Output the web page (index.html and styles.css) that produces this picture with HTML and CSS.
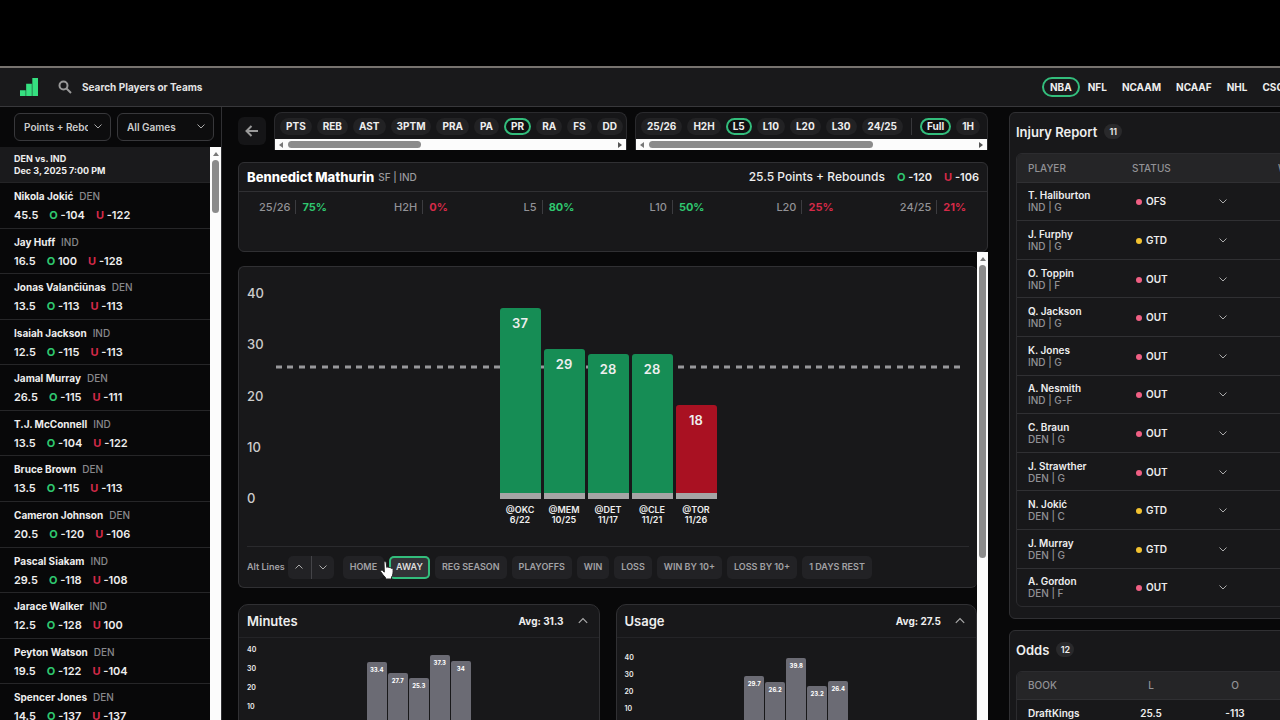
FILE: index.html
```html
<!DOCTYPE html>
<html lang="en">
<head>
<meta charset="utf-8">
<title>Player Props</title>
<link rel="stylesheet" href="styles.css">
</head>
<body>
<svg class="defs" aria-hidden="true">
  <symbol id="down" viewBox="0 0 10 10"><path d="M1.5 3.5 5 7l3.500-3.500"/></symbol>
  <symbol id="up" viewBox="0 0 10 10"><path d="M1.500 6.500 5 3l3.500 3.500"/></symbol>
</svg>
<div class="app">
  <header class="topbar">
    <svg class="logo" viewBox="0 0 19 19" aria-label="Home"><path d="M0 13h6v6H0zM6.500 6h6v13h-6zM13 0h6v19h-6z"/></svg>
    <label class="search">
      <svg viewBox="0 0 14 14" aria-hidden="true"><circle cx="5.500" cy="5.500" r="4"/><path d="m8.500 8.500 4.500 4.500"/></svg>
      <input type="text" placeholder="Search Players or Teams" aria-label="Search Players or Teams">
    </label>
    <nav class="leagues">
      <a class="league on" href="#">NBA</a><a class="league" href="#">NFL</a><a class="league" href="#">NCAAM</a><a class="league" href="#">NCAAF</a><a class="league" href="#">NHL</a><a class="league" href="#">CSGO</a>
    </nav>
  </header>

  <div class="body">
    <aside class="sidebar">
      <div class="filters">
        <div class="picker"><select aria-label="Stat"><option>Points + Rebounds</option></select><svg aria-hidden="true"><use href="#down"/></svg></div>
        <div class="picker"><select aria-label="Games"><option>All Games</option></select><svg aria-hidden="true"><use href="#down"/></svg></div>
      </div>
      <div class="list-wrap">
        <div class="list">
          <div class="game">DEN vs. IND<br>Dec 3, 2025 7:00 PM</div>
          <ul class="players" id="players"></ul>
        </div>
        <div class="vbar list-bar"><i class="tip"></i><i class="thumb"></i></div>
      </div>
    </aside>

    <main class="main">
      <div class="tools">
        <button class="back" aria-label="Back"><svg viewBox="0 0 14 14"><path d="M13 7H2M6.500 2 1.500 7l5 5"/></svg></button>
        <div class="strip">
          <div class="pills">
            <button class="pill">PTS</button><button class="pill">REB</button><button class="pill">AST</button><button class="pill">3PTM</button><button class="pill">PRA</button><button class="pill">PA</button><button class="pill on">PR</button><button class="pill">RA</button><button class="pill">FS</button><button class="pill">DD</button>
          </div>
          <div class="hbar"><i class="tip prev"></i><i class="track"><i class="thumb short"></i></i><i class="tip next"></i></div>
        </div>
        <div class="strip">
          <div class="pills">
            <button class="pill">25/26</button><button class="pill">H2H</button><button class="pill on">L5</button><button class="pill">L10</button><button class="pill">L20</button><button class="pill">L30</button><button class="pill">24/25</button><span class="rule"></span><button class="pill on">Full</button><button class="pill">1H</button>
          </div>
          <div class="hbar"><i class="tip prev"></i><i class="track"><i class="thumb long"></i></i><i class="tip next"></i></div>
        </div>
      </div>

      <section class="card hero">
        <div class="hero-head">
          <h1>Bennedict Mathurin</h1><span class="pos">SF | IND</span>
          <span class="line">25.5 Points + Rebounds</span>
          <span class="odd"><b class="o">O</b> -120</span>
          <span class="odd"><b class="u">U</b> -106</span>
        </div>
        <div class="rates">
          <span class="rate">25/26<b class="good">75%</b></span>
          <span class="rate">H2H<b class="bad">0%</b></span>
          <span class="rate">L5<b class="good">80%</b></span>
          <span class="rate">L10<b class="good">50%</b></span>
          <span class="rate">L20<b class="bad">25%</b></span>
          <span class="rate">24/25<b class="bad">21%</b></span>
        </div>
      </section>

      <div class="scroll">
        <div class="content">
          <section class="card chart-card">
            <div class="chart">
              <div class="axis"><span>40</span><span>30</span><span>20</span><span>10</span><span>0</span></div>
              <svg class="dash" aria-hidden="true"><line x1="0" y1="2" x2="100%" y2="2"/></svg>
              <div class="bars">
                <div class="col"><div class="bar" style="height:191px">37</div><span>@OKC<br>6/22</span></div>
                <div class="col"><div class="bar" style="height:150px">29</div><span>@MEM<br>10/25</span></div>
                <div class="col"><div class="bar" style="height:145px">28</div><span>@DET<br>11/17</span></div>
                <div class="col"><div class="bar" style="height:145px">28</div><span>@CLE<br>11/21</span></div>
                <div class="col"><div class="bar miss" style="height:94px">18</div><span>@TOR<br>11/26</span></div>
              </div>
            </div>
            <div class="alt">
              <span class="alt-label">Alt Lines</span>
              <div class="stepper"><button aria-label="Raise line"><svg><use href="#up"/></svg></button><button aria-label="Lower line"><svg><use href="#down"/></svg></button></div>
              <div class="chips">
                <button class="chip">HOME</button><button class="chip on">AWAY
                  <svg class="hand" viewBox="0 0 14 19" aria-hidden="true"><path d="M4 1.500C4 .3 6 .3 6.200 1.500L6.800 6.500c.5-.8 2-.6 2.200.3.700-.7 2-.3 2.100.6.8-.4 2 0 2 1.200.1 3-.1 6-1.600 7.500V18H5.500v-1.500C3.500 15 2.500 13 .8 10.800c-.8-1.100.8-2.300 1.900-1.200l1.600 1.500z"/></svg>
                </button><button class="chip">REG SEASON</button><button class="chip">PLAYOFFS</button><button class="chip">WIN</button><button class="chip">LOSS</button><button class="chip">WIN BY 10+</button><button class="chip">LOSS BY 10+</button><button class="chip">1 DAYS REST</button>
              </div>
            </div>
          </section>
          <div class="minis">
            <section class="card mini">
              <div class="mini-head"><h2>Minutes</h2><span>Avg: 31.3</span><button aria-label="Collapse Minutes"><svg><use href="#up"/></svg></button></div>
              <div class="mini-chart">
                <div class="axis minutes"><span>40</span><span>30</span><span>20</span><span>10</span><span>0</span></div>
                <div class="bars"><div class="bar" style="height:64px">33.4</div><div class="bar" style="height:53px">27.7</div><div class="bar" style="height:48px">25.3</div><div class="bar" style="height:71px">37.3</div><div class="bar" style="height:65px">34</div></div>
              </div>
            </section>
            <section class="card mini">
              <div class="mini-head"><h2>Usage</h2><span>Avg: 27.5</span><button aria-label="Collapse Usage"><svg><use href="#up"/></svg></button></div>
              <div class="mini-chart">
                <div class="axis usage"><span>40</span><span>30</span><span>20</span><span>10</span><span>0</span></div>
                <div class="bars"><div class="bar" style="height:50px">29.7</div><div class="bar" style="height:44px">26.2</div><div class="bar" style="height:68px">39.8</div><div class="bar" style="height:40px">23.2</div><div class="bar" style="height:45px">26.4</div></div>
              </div>
            </section>
          </div>
        </div>
        <div class="vbar main-bar"><i class="tip"></i><i class="thumb"></i></div>
      </div>
    </main>

    <aside class="rail">
      <section class="card panel">
        <h2>Injury Report <span class="count">11</span></h2>
        <div class="frame">
          <table class="injuries">
            <thead><tr><th>PLAYER</th><th>STATUS</th><th></th><th>W/O</th></tr></thead>
            <tbody id="injuries"></tbody>
          </table>
        </div>
      </section>
      <section class="card panel">
        <h2>Odds <span class="count">12</span></h2>
        <div class="frame">
          <table class="books">
            <thead><tr><th>BOOK</th><th>L</th><th>O</th><th></th></tr></thead>
            <tbody><tr><td>DraftKings</td><td>25.5</td><td>-113</td><td></td></tr></tbody>
          </table>
        </div>
      </section>
    </aside>
  </div>
</div>
<script src="app.js"></script>
</body>
</html>
```
FILE: styles.css
```css
* { box-sizing: border-box; }
body { margin: 0; background: #000; color: #eee; font: 600 11px/12px Inter, "Liberation Sans", sans-serif; }
button, select, input { font: inherit; color: inherit; border: 0; background: none; padding: 0; margin: 0; }
h1, h2, ul { margin: 0; padding: 0; }
i { display: block; }
svg { width: 10px; height: 10px; fill: none; stroke: #aaa; stroke-width: 1; flex: none; display: block; }
.defs { position: absolute; width: 0; height: 0; }
.app { height: 100vh; padding-top: 66px; display: flex; flex-direction: column; overflow: hidden; }
.card { background: #18181a; border: 1px solid #303033; border-radius: 6px; }

.topbar { display: flex; align-items: center; height: 41px; flex: none; background: #19191b; border-top: 2px solid #77736f; border-bottom: 1px solid #38383b; padding-left: 20px; overflow: hidden; }
.logo { width: 18px; height: 18px; fill: #35e080; stroke: none; }
.search { display: flex; align-items: center; gap: 10px; margin-left: 20px; flex: 1; font-size: 10px; font-weight: 700; }
.search svg { width: 14px; height: 14px; stroke: #999; stroke-width: 2; }
.search input { width: 200px; outline: 0; }
.search input::placeholder { color: #e4e4e4; opacity: 1; }
.leagues { display: flex; gap: 1px; width: 238px; flex: none; }
.league { color: #eee; text-decoration: none; padding: 1px 5px; border: 2px solid transparent; border-radius: 10px; font-size: 10px; line-height: 14px; font-weight: 700; }
.league.on { border-color: #33bd7c; padding: 1px 6px; }

.body { display: grid; grid-template-columns: 222px minmax(0, 1fr) 271px; flex: 1; min-height: 0; background: #080809; }
.sidebar { border-right: 1px solid #303033; display: flex; flex-direction: column; min-height: 0; }
.filters { display: grid; grid-template-columns: 1fr 1fr; gap: 6px; padding: 6px 7px 6px 14px; }
.picker { position: relative; font-size: 10px; }
.picker select { appearance: none; width: 100%; height: 28px; border: 1px solid #38383b; border-radius: 6px; background: #0d0d0e; padding: 0 22px 0 9px; color: #ccc; }
.picker svg { position: absolute; right: 8px; top: 8px; pointer-events: none; }
.list-wrap { display: flex; flex: 1; min-height: 0; overflow: hidden; }
.list { flex: 1; }
.game { height: 36px; padding: 6px 14px; background: #1a1a1c; border-bottom: 1px solid #242426; font-size: 9px; font-weight: 700; }
.players { list-style: none; height: 547px; display: grid; grid-auto-rows: 1fr; }
.players li { border-bottom: 1px solid #262628; padding: 7px 14px 6px; display: flex; flex-direction: column; gap: 7px; }
.name { font-size: 10px; font-weight: 700; }
.players small { font-size: 10px; color: #88888c; font-weight: 500; margin-left: 6px; }
.prices { display: flex; gap: 11px; }
.o { color: #2fc76f; font-weight: 700; }
.u { color: #d42a48; font-weight: 700; }

.vbar { background: #fcfcfc; display: flex; flex-direction: column; align-items: center; gap: 4px; padding-top: 5px; width: 11px; flex: none; }
.thumb { background: #8b8b8b; border-radius: 4px; }
.vbar .thumb { width: 7px; }
.list-bar .thumb { height: 53px; }
.main-bar .thumb { height: 293px; }
.tip { border: 3px solid transparent; border-bottom: 4px solid #777; border-top: 0; width: 0; height: 0; flex: none; }
.hbar { height: 11px; background: #fcfcfc; display: flex; align-items: center; gap: 5px; padding: 0 4px; }
.tip.prev { border: 3px solid transparent; border-right: 4px solid #777; border-left: 0; }
.tip.next { border: 3px solid transparent; border-left: 4px solid #555; border-right: 0; }
.track { flex: 1; }
.hbar .thumb { height: 7px; }
.short { width: 41%; }
.long { width: 69%; }

.main { padding: 5px 21px 0 16px; display: flex; flex-direction: column; min-height: 0; }
.tools { display: grid; grid-template-columns: 28px minmax(0, 1fr) minmax(0, 1fr); column-gap: 8px; align-items: center; }
.back { height: 28px; background: #151517; border-radius: 6px; display: grid; place-items: center; }
.back svg { width: 14px; height: 14px; stroke: #999; stroke-width: 2; }
.strip { border: 1px solid #2a2a2d; border-bottom: 0; border-radius: 8px 8px 0 0; background: #161618; overflow: hidden; }
.pills { display: flex; gap: 5px; padding: 5px 4px 4px 5px; overflow: hidden; }
.pill { flex: none; height: 17px; padding: 0 6px; border-radius: 9px; background: #222224; font-size: 10px; font-weight: 700; line-height: 17px; }
.pill.on { background: #101011; box-shadow: inset 0 0 0 2px #33bd7c; padding: 0 7px; }
.rule { width: 1px; background: #38383b; flex: none; margin: 0 3px; }

.hero { margin-top: 12px; height: 90px; flex: none; }
.hero-head { display: flex; align-items: center; height: 29px; padding: 0 8px; border-bottom: 1px solid #303033; font-size: 12px; }
h1 { font-size: 13px; font-weight: 800; color: #fff; }
.pos { font-size: 10px; font-weight: 500; color: #9a9a9e; margin-left: 4px; flex: 1; }
.line { font-weight: 500; }
.odd { margin-left: 12px; font-size: 11px; }
.rates { display: grid; grid-template-columns: repeat(6, 1fr); justify-items: center; margin: 0 -10px; padding: 8px 0; color: #929296; }
.rate { line-height: 14px; display: flex; font-weight: 500; }
.rate b { margin-left: 5px; padding-left: 6px; border-left: 1px solid #3c3c40; font-weight: 700; }
.good { color: #2fc76f; }
.bad { color: #d42a48; }

.scroll { flex: 1; min-height: 0; display: flex; overflow: hidden; }
.content { flex: 1; min-width: 0; padding-top: 14px; }
.chart-card { padding: 20px 8px 0; border-right: 0; }
.chart { display: grid; height: 259px; }
.chart > *, .mini-chart > * { grid-area: 1 / 1; }
.axis { display: flex; flex-direction: column; justify-content: space-between; }
.chart .axis { height: 217px; font-size: 13px; font-weight: 500; color: #ccc; }
.dash { width: calc(100% - 33px); height: 4px; margin: 78px 0 0 29px; }
.dash line { stroke: #98989b; stroke-width: 3; stroke-dasharray: 6 5 6 6; }
.bars { display: flex; justify-content: center; align-items: flex-end; }
.chart .bars { gap: 3px; height: 240px; z-index: 1; }
.col { width: 41px; text-align: center; font-size: 9px; line-height: 10px; }
.col span { display: block; padding-top: 6px; height: 28px; white-space: nowrap; }
.col .bar { background: #168d55; border-radius: 3px 3px 0 0; border-bottom: 6px solid #a5a5a5; padding-top: 8px; font-size: 13px; line-height: 14px; }
.col .miss { background: #a91122; }
.alt { border-top: 1px solid #2a2a2d; height: 41px; display: flex; align-items: center; color: #a2a2a6; }
.alt-label, .chip { font-size: 9px; font-weight: 600; white-space: nowrap; }
.stepper { display: flex; height: 23px; background: #222225; border-radius: 5px; margin-left: 3px; }
.stepper button { width: 23px; display: grid; place-items: center; }
.stepper button + button { border-left: 1px solid #444448; }
.chips { display: flex; gap: 5px; margin-left: 9px; }
.chip { position: relative; height: 23px; padding: 0 7px; border-radius: 5px; background: #222225; }
.chip.on { color: #ddd; background: #333337; box-shadow: inset 0 0 0 2px #33bd7c; }
.hand { position: absolute; left: -9px; top: 5px; width: 14px; height: 19px; fill: #fff; stroke: #222; }
.minis { display: grid; grid-template-columns: 1fr 1fr; gap: 16px; margin-top: 16px; }
.mini { border-radius: 10px 10px 0 0; min-height: 140px; }
.mini-head { display: flex; align-items: center; height: 33px; padding: 0 10px 0 8px; border-bottom: 1px solid #242427; font-size: 10px; font-weight: 700; }
h2 { font-size: 13px; font-weight: 600; flex: 1; }
.mini-head button { margin-left: 13px; }
.mini-head svg { width: 12px; height: 12px; }
.mini-chart { display: grid; padding: 0 8px; height: 88px; align-items: end; }
.mini-chart .axis { font-size: 7px; line-height: 8px; margin-bottom: -4px; }
.minutes { height: 84px; }
.usage { height: 76px; }
.mini-chart .bars { gap: 1px; font-size: 6px; }
.mini-chart .bar { width: 20px; background: #6b6b74; border-radius: 2px 2px 0 0; text-align: center; padding-top: 2px; color: #fff; font-weight: 700; }

.rail { padding-top: 5px; overflow: hidden; }
.panel { width: 340px; padding: 0 6px 11px; margin-bottom: 11px; }
.panel h2 { height: 40px; padding-bottom: 3px; display: flex; align-items: center; gap: 7px; }
.count { font-size: 9px; min-width: 18px; padding: 0 4px; line-height: 15px; border-radius: 8px; background: #29292b; text-align: center; }
.frame { border: 1px solid #2c2c2f; border-radius: 6px; overflow: hidden; }
table { width: 100%; border-collapse: collapse; table-layout: fixed; }
th { background: #252527; color: #929296; font-size: 10px; font-weight: 500; text-align: left; height: 28px; padding: 0; border-bottom: 1px solid #303033; }
td { padding: 0; border-bottom: 1px solid #303033; font-size: 10px; }
th:first-child, td:first-child { width: 103px; padding-left: 11px; }
.injuries { height: 452px; }
.injuries th:nth-child(2) { width: 98px; padding-left: 12px; }
.injuries th:nth-child(3) { width: 60px; }
.injuries td:nth-child(2) { padding-left: 16px; }
.injuries small { display: block; font-size: 10px; font-weight: 500; color: #929296; }
.injuries tr:last-child td { border-bottom: 0; }
.dot { display: inline-block; width: 6px; height: 6px; border-radius: 3px; background: #ef5f83; margin-right: 4px; }
.dot.gtd { background: #f2c230; }
.books th, .books td { text-align: center; width: 84px; }
.books th { height: 27px; }
.books th:first-child, .books td:first-child { text-align: left; width: 92px; }
.books td { height: 27px; border-bottom: 0; }
```
FILE: app.js
```js
const players = [
  ["Nikola Jokić", "DEN", "45.5", "-104", "-122"],
  ["Jay Huff", "IND", "16.5", "100", "-128"],
  ["Jonas Valančiūnas", "DEN", "13.5", "-113", "-113"],
  ["Isaiah Jackson", "IND", "12.5", "-115", "-113"],
  ["Jamal Murray", "DEN", "26.5", "-115", "-111"],
  ["T.J. McConnell", "IND", "13.5", "-104", "-122"],
  ["Bruce Brown", "DEN", "13.5", "-115", "-113"],
  ["Cameron Johnson", "DEN", "20.5", "-120", "-106"],
  ["Pascal Siakam", "IND", "29.5", "-118", "-108"],
  ["Jarace Walker", "IND", "12.5", "-128", "100"],
  ["Peyton Watson", "DEN", "19.5", "-122", "-104"],
  ["Spencer Jones", "DEN", "14.5", "-137", "-137"]
];
document.getElementById("players").innerHTML = players.map(([name, team, line, over, under]) =>
  `<li><span class="name">${name}<small>${team}</small></span><span class="prices"><span>${line}</span><span><b class="o">O</b> ${over}</span><span><b class="u">U</b> ${under}</span></span></li>`).join("");

const injuries = [
  ["T. Haliburton", "IND | G", "OFS"],
  ["J. Furphy", "IND | G", "GTD"],
  ["O. Toppin", "IND | F", "OUT"],
  ["Q. Jackson", "IND | G", "OUT"],
  ["K. Jones", "IND | G", "OUT"],
  ["A. Nesmith", "IND | G-F", "OUT"],
  ["C. Braun", "DEN | G", "OUT"],
  ["J. Strawther", "DEN | G", "OUT"],
  ["N. Jokić", "DEN | C", "GTD"],
  ["J. Murray", "DEN | G", "GTD"],
  ["A. Gordon", "DEN | F", "OUT"]
];
document.getElementById("injuries").innerHTML = injuries.map(([name, team, status]) =>
  `<tr><td>${name}<small>${team}</small></td><td><i class="dot ${status.toLowerCase()}"></i>${status}</td><td><svg><use href="#down"/></svg></td><td></td></tr>`).join("");
```
